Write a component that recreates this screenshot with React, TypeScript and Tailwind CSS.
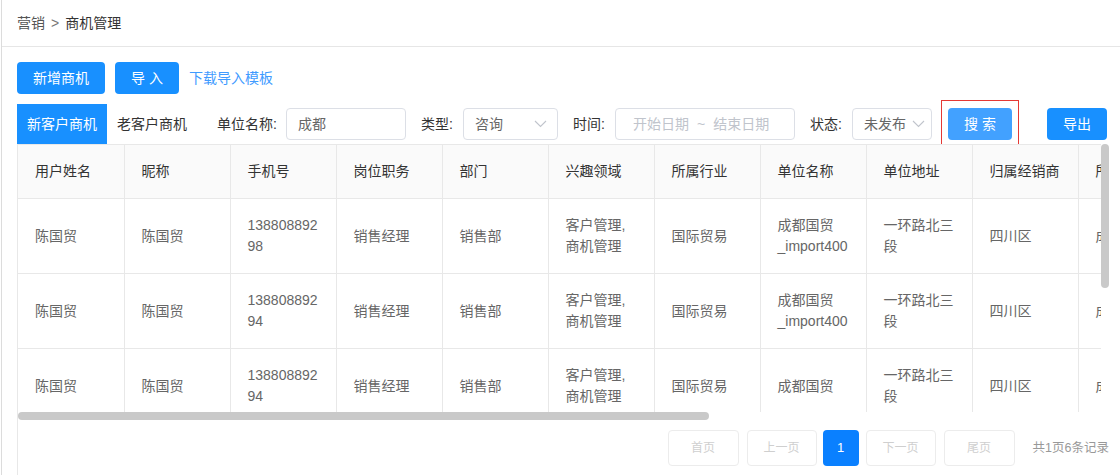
import React from "react";

const COLUMNS = [
    "用户姓名", "昵称", "手机号", "岗位职务", "部门", "兴趣领域", "所属行业", "单位名称",
    "单位地址", "归属经销商", "所属区域", "客户来源", "跟进状态", "创建人", "创建时间", "操作",
];

type Row = string[];

const ROWS: Row[] = [
    ["陈国贸", "陈国贸", "13880889298", "销售经理", "销售部", "客户管理,商机管理", "国际贸易", "成都国贸_import400", "一环路北三段", "四川区", "成都", "导入", "未发布", "admin", "2021-03-02", "查看"],
    ["陈国贸", "陈国贸", "13880889294", "销售经理", "销售部", "客户管理,商机管理", "国际贸易", "成都国贸_import400", "一环路北三段", "四川区", "成都", "导入", "未发布", "admin", "2021-03-02", "查看"],
    ["陈国贸", "陈国贸", "13880889294", "销售经理", "销售部", "客户管理,商机管理", "国际贸易", "成都国贸", "一环路北三段", "四川区", "成都", "导入", "未发布", "admin", "2021-03-02", "查看"],
    ["陈国贸", "陈国贸", "13880889294", "销售经理", "销售部", "客户管理,商机管理", "国际贸易", "成都国贸", "一环路北三段", "四川区", "成都", "导入", "未发布", "admin", "2021-03-02", "查看"],
    ["陈国贸", "陈国贸", "13880889291", "销售经理", "销售部", "客户管理", "国际贸易", "成都国贸", "一环路北三段", "四川区", "成都", "导入", "未发布", "admin", "2021-03-02", "查看"],
    ["陈国贸", "陈国贸", "13880889290", "销售经理", "销售部", "客户管理", "国际贸易", "成都国贸", "一环路北三段", "四川区", "成都", "导入", "未发布", "admin", "2021-03-02", "查看"],
];

function Chevron() {
    return (
        <svg width="13" height="8" viewBox="0 0 13 8" fill="none" stroke="#c0c4cc" strokeWidth="1.1">
            <path d="M1 1 L6.5 6.5 L12 1" />
        </svg>
    );
}

function PageButton({ label, active, wide }: { label: string; active?: boolean; wide?: boolean }) {
    if (active) {
        return (
            <div className="w-[36px] h-[36px] rounded bg-[#0a80ff] text-white text-[13px] flex items-center justify-center">
                {label}
            </div>
        );
    }
    return (
        <div className={`${wide ? "w-[71px]" : "w-[70px]"} h-[36px] rounded border border-[#ececec] text-[#cfcfcf] text-[12px] flex items-center justify-center`}>
            {label}
        </div>
    );
}

export default function App() {
    return (
        <div className="w-[1120px] h-[475px] overflow-hidden bg-white pl-px text-[14px] font-['Liberation_Sans','Noto_Sans_CJK_SC',sans-serif]">
            <div className="h-full border-l border-[#dcdcdc] flex flex-col">
                {/* Breadcrumb */}
                <div className="h-[47px] shrink-0 border-b border-[#e6e6e6] pl-[15px] flex items-center text-[#555]">
                    <span>营销</span>
                    <span className="mx-[6px] text-[#777]">&gt;</span>
                    <span className="text-[#333]">商机管理</span>
                </div>

                <div className="pl-[15px] flex-1 min-h-0 overflow-hidden flex flex-col">
                    {/* Actions */}
                    <div className="mt-[15px] h-[32px] flex items-center">
                        <button className="w-[88px] h-[32px] rounded bg-[#1890ff] text-white">新增商机</button>
                        <button className="ml-[10px] w-[64px] h-[32px] rounded bg-[#1890ff] text-white">导&nbsp;入</button>
                        <span className="ml-[10px] text-[#3f9bff]">下载导入模板</span>
                    </div>

                    {/* Tabs + filters */}
                    <div className="mt-[10px] h-[40px] flex items-center">
                        <div className="w-[90px] h-[40px] bg-[#1890ff] text-white flex items-center justify-center">新客户商机</div>
                        <div className="ml-[10px] w-[70px] text-[#333] text-center">老客户商机</div>

                        <span className="ml-[30px] w-[69px] text-[#333]">单位名称:</span>
                        <div className="w-[120px] h-[32px] border border-[#dcdfe6] rounded pl-[11px] flex items-center text-[#666]">成都</div>

                        <span className="ml-[15px] w-[42px] text-[#333]">类型:</span>
                        <div className="w-[95px] h-[32px] border border-[#dcdfe6] rounded pl-[11px] pr-[10px] flex items-center justify-between text-[#666]">
                            <span>咨询</span>
                            <Chevron />
                        </div>

                        <span className="ml-[15px] w-[42px] text-[#333]">时间:</span>
                        <div className="w-[180px] h-[32px] border border-[#dcdfe6] rounded pl-[17px] flex items-center text-[#c0c4cc]">
                            <span>开始日期</span>
                            <span className="mx-[8px]">~</span>
                            <span>结束日期</span>
                        </div>

                        <span className="ml-[15px] w-[42px] text-[#333]">状态:</span>
                        <div className="w-[80px] h-[32px] border border-[#dcdfe6] rounded pl-[11px] pr-[6px] flex items-center justify-between text-[#666]">
                            <span>未发布</span>
                            <Chevron />
                        </div>

                        <div className="ml-[9px] self-start -mt-[4px] w-[78px] h-[51px] border border-[#e53935] flex justify-center pt-[7px]">
                            <button className="w-[64px] h-[32px] rounded bg-[#42a1ff] text-white">搜&nbsp;索</button>
                        </div>

                        <button className="ml-[28px] w-[60px] h-[32px] rounded bg-[#1890ff] text-white">导出</button>
                    </div>

                    {/* Table + pagination */}
                    <div className="flex-1 flex flex-col border-l border-[#e8e8e8] min-h-0 pr-[11px]">
                        <div className="flex h-[276px] shrink-0 overflow-hidden">
                            <div className="flex-1 min-w-0 overflow-hidden flex flex-col">
                                <div className="flex-1 min-h-0 overflow-hidden">
                                    <table className="border-collapse table-fixed w-max border-t border-[#e8e8e8]">
                                        <thead>
                                            <tr className="h-[54px] bg-[#fafafa]">
                                                {COLUMNS.map((c) => (
                                                    <th key={c} className="w-[106px] min-w-[106px] border-r border-b border-[#e8e8e8] pl-[17px] pr-[17px] text-left font-normal text-[#333]">
                                                        {c}
                                                    </th>
                                                ))}
                                            </tr>
                                        </thead>
                                        <tbody>
                                            {ROWS.map((row, i) => (
                                                <tr key={i} className="h-[75px]">
                                                    {row.map((cell, j) => (
                                                        <td key={j} className="w-[106px] min-w-[106px] max-w-[106px] border-r border-b border-[#e8e8e8] pl-[17px] pr-[17px] text-[#666] leading-[21px] [overflow-wrap:anywhere]">
                                                            {cell}
                                                        </td>
                                                    ))}
                                                </tr>
                                            ))}
                                        </tbody>
                                    </table>
                                </div>
                                {/* horizontal scrollbar */}
                                <div className="h-2 shrink-0">
                                    <div className="w-[691px] h-2 rounded-full bg-[#c9c9c9]" />
                                </div>
                            </div>
                            {/* vertical scrollbar */}
                            <div className="w-2 basis-2 shrink-0 flex flex-col">
                                <div className="h-36 w-2 rounded-full bg-[#c9c9c9]" />
                            </div>
                        </div>

                        {/* Pagination */}
                        <div className="mt-[10px] flex items-center justify-end">
                            <PageButton label="首页" wide />
                            <div className="ml-[8px]"><PageButton label="上一页" /></div>
                            <div className="ml-[6px]"><PageButton label="1" active /></div>
                            <div className="ml-[7px]"><PageButton label="下一页" /></div>
                            <div className="ml-[8px]"><PageButton label="尾页" wide /></div>
                            <span className="ml-[18px] text-[12.5px] text-[#999]">共1页6条记录</span>
                        </div>
                    </div>
                </div>
            </div>
        </div>
    );
}
